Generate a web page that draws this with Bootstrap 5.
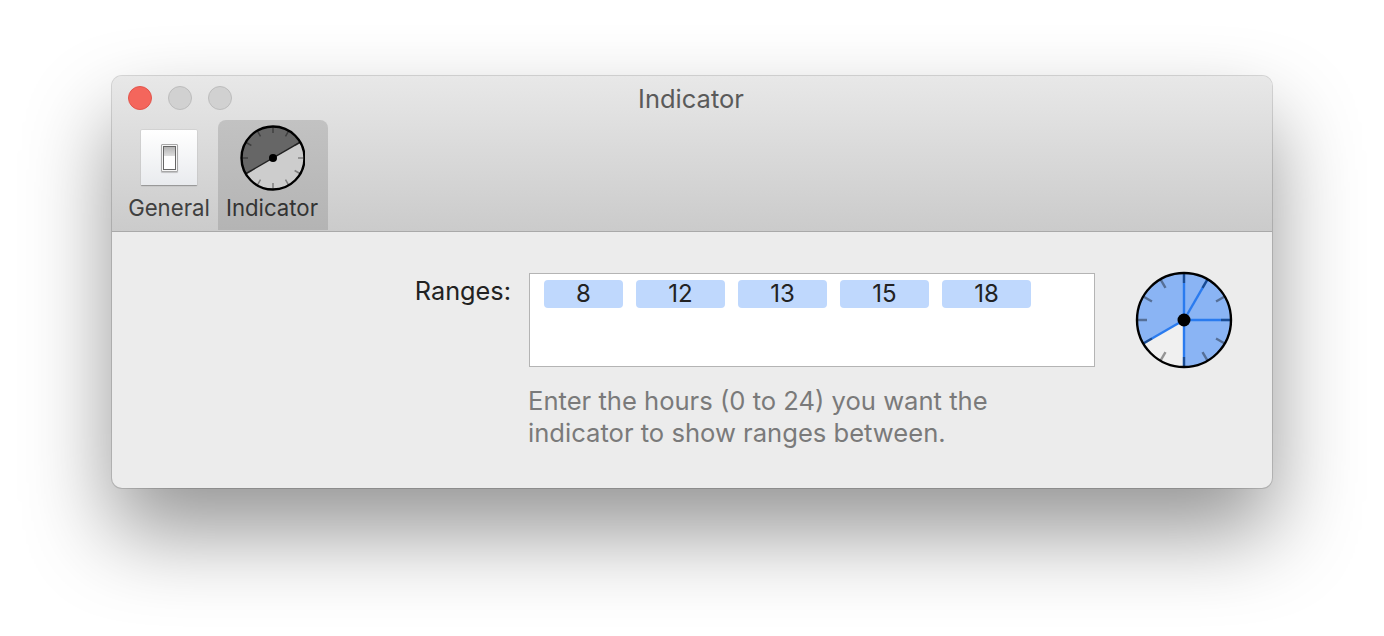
<!DOCTYPE html>
<html lang="en">
<head>
    <meta charset="UTF-8" />
    <title>Indicator</title>
    <link rel="stylesheet" href="https://cdn.jsdelivr.net/npm/bootstrap@5.3.0/dist/css/bootstrap.min.css" />
    <style>
        html, body { height: 636px; }
        body { background: #fff; font-family: Inter, "Liberation Sans", sans-serif; padding: 76px 0 0 112px; }
        .prefs-window { width: 1160px; height: 412px; background: #ececec; border-radius: 10px; box-shadow: 0 0 0 1px rgba(0,0,0,.14), 0 44px 86px rgba(0,0,0,.42); overflow: hidden; }
        .prefs-toolbar { height: 156px; background: linear-gradient(#e8e8e8, #cbcbcb); border-bottom: 1px solid #a9a9a9; padding: 10px 0 0 16px; }
        .lights { gap: 16px; height: 24px; }
        .light { width: 24px; height: 24px; border-radius: 50%; background: #d1d1d1; border: 1px solid #bcbcbc; }
        .light-red { background: #f4665c; border-color: #e2554c; }
        .title-text { font-size: 25.5px; line-height: 28px; color: #5a5a5a; width: 1158px; margin-left: -16px; margin-top: -25px; text-align: center; }
        .tabs-row { margin-top: 7px; height: 110px; }
        .prefs-tab { width: 110px; height: 110px; border-radius: 8px 8px 0 0; color: #404040; font-size: 22.2px; line-height: 26px; }
        .prefs-tab.tab-on { background: linear-gradient(#c2c2c2, #b4b4b4); color: #333; padding-right: 2px; }
        .tab-first { width: 82px; margin-right: 8px; }
        .tab-icon { height: 76px; }
        .switch-tile { width: 56px; height: 56px; background: linear-gradient(#fff, #e9ebee); border-bottom: 1px solid #999; box-shadow: 0 0 1px rgba(0,0,0,.5); border-radius: 1px; margin-top: 10px; }
        .switch-body { width: 17px; height: 28px; border: 1px solid #a8a8a8; background: #f6f6f6; box-shadow: 0 1px 1px rgba(0,0,0,.2); border-radius: 1px; padding: 1px; }
        .switch-rock { width: 100%; height: 100%; border: 1px solid #666; background: linear-gradient(#b4b4b4 0, #dcdcdc 40%, #fff 42%); }
        .tab-label { margin-top: -1px; }
        .prefs-body { padding: 41px 0 0 0; }
        .ranges-label { width: 399px; text-align: right; font-size: 25.3px; line-height: 36px; color: #222; margin-right: 18px; }
        .ranges-box { width: 566px; height: 94px; background: #fff; border: 1px solid #b4b4b4; padding: 6px 14px; gap: 13px; }
        .range-token { height: 28px; background: #bfd8fd; border-radius: 4px; width: 89px; text-align: center; font-size: 24px; line-height: 28px; color: #222; }
        .range-token.token-short { width: 79px; }
        .hint-text { font-size: 25.6px; line-height: 32px; color: #7a7a7a; margin-top: 18px; margin-left: -1px; white-space: nowrap; }
        .big-clock { margin: -2px 0 0 40px; }
    </style>
</head>
<body>

<div class="prefs-window">
    <div class="prefs-toolbar">
        <div class="lights d-flex">
            <div class="light light-red"></div>
            <div class="light"></div>
            <div class="light"></div>
        </div>
        <div class="title-text">Indicator</div>
        <div class="tabs-row d-flex">
            <div class="prefs-tab tab-first d-flex flex-column align-items-center">
                <div class="tab-icon">
                    <div class="switch-tile d-flex align-items-center justify-content-center">
                        <div class="switch-body"><div class="switch-rock"></div></div>
                    </div>
                </div>
                <div class="tab-label">General</div>
            </div>
            <div class="prefs-tab tab-on d-flex flex-column align-items-center">
                <div class="tab-icon">
                    <svg width="66" height="76" viewBox="-1 0 66 76">
                        <circle cx="33" cy="38" r="31.5" fill="#cdcdcd"/>
                        <path d="M33 38 L60.3 22.2 A31.5 31.5 0 0 0 5.7 53.8 Z" fill="#666"/>
                        <g stroke="#000" stroke-opacity=".38" stroke-width="1.5" id="smallTicks"></g>
                        <line x1="5.7" y1="53.8" x2="60.3" y2="22.2" stroke="#222" stroke-width="1.5"/>
                        <circle cx="33" cy="38" r="31.5" fill="none" stroke="#000" stroke-width="2.4"/>
                        <circle cx="33" cy="38" r="4" fill="#000"/>
                    </svg>
                </div>
                <div class="tab-label">Indicator</div>
            </div>
        </div>
    </div>
    <div class="prefs-body d-flex">
        <div class="ranges-label">Ranges:</div>
        <div>
            <div class="ranges-box d-flex align-items-start">
                <div class="range-token token-short">8</div>
                <div class="range-token">12</div>
                <div class="range-token">13</div>
                <div class="range-token">15</div>
                <div class="range-token">18</div>
            </div>
            <div class="hint-text">Enter the hours (0 to 24) you want the<br>indicator to show ranges between.</div>
        </div>
        <svg class="big-clock" width="98" height="98" viewBox="0 0 98 98">
            <circle cx="49" cy="49" r="47" fill="#f0f0f0"/>
            <path d="M49 49 L8.3 72.5 A47 47 0 1 1 49 96 Z" fill="#8ab4f4"/>
            <g stroke="#2a7bef" stroke-width="2.4">
                <line x1="49" y1="49" x2="49" y2="2"/>
                <line x1="49" y1="49" x2="72.5" y2="8.3"/>
                <line x1="49" y1="49" x2="96" y2="49"/>
                <line x1="49" y1="49" x2="49" y2="96"/>
                <line x1="49" y1="49" x2="8.3" y2="72.5"/>
            </g>
            <g stroke="#000" stroke-opacity=".38" stroke-width="2.4" id="bigTicks"></g>
            <circle cx="49" cy="49" r="47" fill="none" stroke="#000" stroke-width="2.4"/>
            <circle cx="49" cy="49" r="6.5" fill="#000"/>
        </svg>
    </div>
</div>

<script>
// tick marks every 2 hours round both clocks
function addTicks(id, cx, cy, outer, inner) {
    const group = document.getElementById(id);
    for (let i = 0; i < 12; i++) {
        const a = i * Math.PI / 6;
        const line = document.createElementNS("http://www.w3.org/2000/svg", "line");
        line.setAttribute("x1", cx + Math.sin(a) * outer);
        line.setAttribute("y1", cy - Math.cos(a) * outer);
        line.setAttribute("x2", cx + Math.sin(a) * inner);
        line.setAttribute("y2", cy - Math.cos(a) * inner);
        group.appendChild(line);
    }
}
addTicks("smallTicks", 33, 38, 31, 25);
addTicks("bigTicks", 49, 49, 47, 37);
</script>

</body>
</html>
